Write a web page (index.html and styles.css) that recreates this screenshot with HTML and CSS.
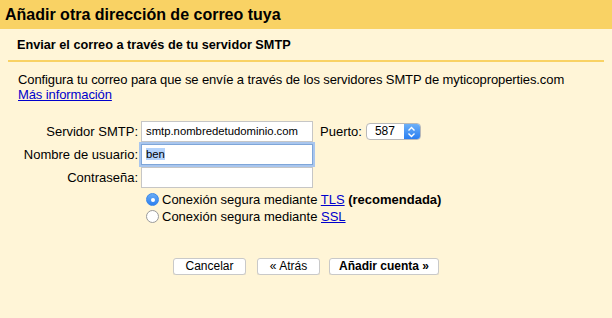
FILE: index.html
```html
<!DOCTYPE html>
<html lang="es">
<head>
  <meta charset="UTF-8">
  <meta name="viewport" content="width=device-width, initial-scale=1.0">
  <title>Añadir otra dirección de correo tuya</title>
  <link rel="stylesheet" href="styles.css">
</head>
<body>
  <div class="title">Añadir otra dirección de correo tuya</div>
  <div class="section">
    <div class="subtitle">Enviar el correo a través de tu servidor SMTP</div>
  </div>
  <div class="content">
    <p class="intro">
      Configura tu correo para que se envíe a través de los servidores SMTP de myticoproperties.com<br>
      <a href="#">Más información</a>
    </p>

    <div class="form">
      <label class="label">Servidor SMTP:</label>
      <div class="field">smtp.nombredetudominio.com</div>
      <div class="port">
        <span>Puerto:</span>
        <div class="select">
          <span class="value">587</span>
          <span class="arrows">
            <svg width="9" height="12" viewBox="0 0 9 12">
              <path d="M1.5 4.5 L4.5 1.5 L7.5 4.5 M1.5 7.5 L4.5 10.5 L7.5 7.5" fill="none" stroke="#fff" stroke-width="1.4"/>
            </svg>
          </span>
        </div>
      </div>

      <label class="label">Nombre de usuario:</label>
      <div class="field focus"><span class="sel">ben</span></div>
      <div></div>

      <label class="label">Contraseña:</label>
      <div class="field"></div>
      <div></div>
    </div>

    <div class="options">
      <label class="option"><span class="radio checked"></span><span>Conexión segura mediante <a href="#">TLS</a> <b>(recomendada)</b></span></label>
      <label class="option"><span class="radio"></span><span>Conexión segura mediante <a href="#">SSL</a></span></label>
    </div>

    <div class="actions">
      <button class="btn btn-cancel">Cancelar</button>
      <button class="btn btn-back">« Atrás</button>
      <button class="btn btn-add">Añadir cuenta »</button>
    </div>
  </div>
</body>
</html>
```

FILE: styles.css
```css
body{
  margin: 0;
  background-color: #fff5d7;
  font-family: "Liberation Sans", Arial, sans-serif;
  font-size: 13px;
  color: #000;
}
a{
  color: #0000cc;
}
.title{
  height: 29px;
  line-height: 29px;
  padding-left: 5px;
  background-color: #f9d264;
  font-size: 16px;
  font-weight: bold;
}
.section{
  padding: 0 8px;
}
.subtitle{
  padding: 8px 0 7px 9px;
  line-height: 16px;
  font-size: 12.7px;
  font-weight: bold;
  border-bottom: 2px solid #f9d264;
}
.content{
  padding-left: 18px;
}
.intro{
  margin: 10px 0 0;
  line-height: 15px;
  letter-spacing: -0.1px;
}
.form{
  display: grid;
  grid-template-columns: 120px 172px auto;
  grid-auto-rows: 21px;
  column-gap: 3px;
  row-gap: 2px;
  margin-top: 19px;
  align-items: center;
}
.label{
  text-align: right;
}
.field{
  box-sizing: border-box;
  height: 21px;
  line-height: 19px;
  padding-left: 4px;
  background-color: #fff;
  border: 1px solid #c6c6c6;
  font-size: 11.3px;
}
.field.focus{
  border-color: #7fa6d8;
  box-shadow: 0 0 0 2px #a9c6ee;
}
.sel{
  background-color: #b5d3fb;
}
.port{
  display: flex;
  align-items: center;
  margin-left: 4px;
}
.select{
  display: flex;
  margin-left: 4px;
  width: 55px;
  height: 17px;
  box-sizing: border-box;
  border: 1px solid #b9b9b9;
  border-radius: 4px;
  background-color: #fff;
  overflow: hidden;
}
.select .value{
  flex: 1;
  padding-left: 8px;
  line-height: 15px;
  font-size: 12px;
}
.select .arrows{
  width: 16px;
  display: flex;
  justify-content: center;
  align-items: center;
  background: linear-gradient(#6cb0f8, #2a7ef1);
}
.options{
  margin: 3px 0 0 128px;
}
.option{
  display: flex;
  align-items: center;
  height: 17px;
}
.radio{
  box-sizing: border-box;
  width: 13px;
  height: 13px;
  margin-right: 3px;
  border: 1px solid #9a9a9a;
  border-radius: 50%;
  background-color: #fff;
  position: relative;
}
.radio.checked{
  border-color: #3a87e8;
  background: linear-gradient(#68acf6, #2d7ff0);
}
.radio.checked::after{
  content: '';
  position: absolute;
  left: 3.5px;
  top: 3.5px;
  width: 4px;
  height: 4px;
  border-radius: 50%;
  background-color: #fff;
}
.actions{
  display: flex;
  margin: 33px 0 0 155px;
}
.btn{
  height: 17px;
  padding: 0;
  font-family: "Liberation Sans", Arial, sans-serif;
  font-size: 12px;
  line-height: 15px;
  color: #000;
  background-color: #fff;
  border: 1px solid #c9c9c9;
  border-radius: 3px;
  box-shadow: 0 1px 0 rgba(0, 0, 0, 0.08);
}
.btn-cancel{
  width: 73px;
}
.btn-back{
  width: 63px;
  margin-left: 11px;
}
.btn-add{
  width: 110px;
  margin-left: 9px;
  font-weight: bold;
}
```
